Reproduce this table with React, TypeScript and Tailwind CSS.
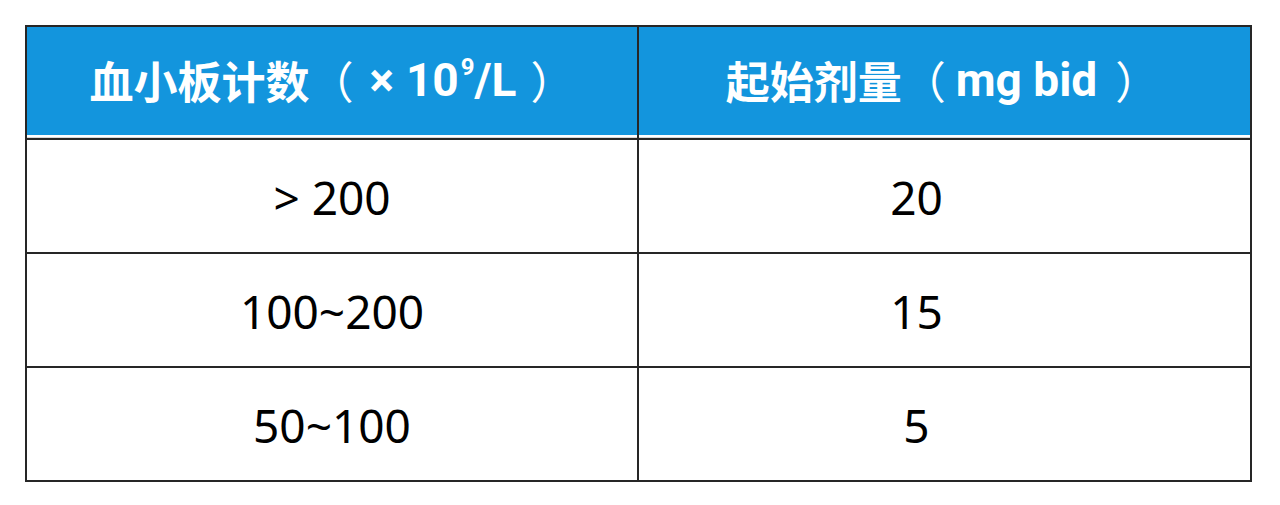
const rows = [
  { count: "> 200", dose: "20" },
  { count: "100~200", dose: "15" },
  { count: "50~100", dose: "5" },
];

export default function App() {
  return (
    <div className="w-[1280px] h-[505px] bg-white pt-[25px] pl-[25px]">
      <div className="w-[1227px] border-2 border-[#262626]">
        {/* header */}
        <div className="grid grid-cols-[612px_1fr] bg-white text-white font-bold">
          <div className="border-r-2 border-[#262626]">
            <div className="h-[108px] bg-[#1395dd] flex items-center justify-center pb-[2px]">
              <span className="font-['Noto_Sans_CJK_SC',sans-serif] text-[44px]">血小板计数</span>
              <span className="font-['Noto_Sans_CJK_SC',sans-serif] text-[44px] font-normal">（</span>
              <span className="font-['Roboto',sans-serif] text-[46px] ml-[16px]">×</span>
              <span className="font-['Roboto',sans-serif] text-[46px] ml-[12px]">10</span>
              <sup className="font-['Roboto',sans-serif] text-[24px] -top-[13px] ml-[2px]">9</sup>
              <span className="font-['Roboto',sans-serif] text-[46px]">/L</span>
              <span className="font-['Noto_Sans_CJK_SC',sans-serif] text-[44px] font-normal ml-[14px]">）</span>
            </div>
            <div className="h-[3px] border-b border-[#d8d8d8]" />
          </div>
          <div>
            <div className="h-[108px] bg-[#1395dd] flex items-center justify-center pb-[2px] pr-[4px]">
              <span className="font-['Noto_Sans_CJK_SC',sans-serif] text-[44px]">起始剂量</span>
              <span className="font-['Noto_Sans_CJK_SC',sans-serif] text-[44px] font-normal">（</span>
              <span className="font-['Roboto',sans-serif] text-[46px] ml-[10px]">mg bid</span>
              <span className="font-['Noto_Sans_CJK_SC',sans-serif] text-[44px] font-normal ml-[18px]">）</span>
            </div>
            <div className="h-[3px] border-b border-[#d8d8d8]" />
          </div>
        </div>

        {/* body */}
        {rows.map((r) => (
          <div
            key={r.count}
            className="grid grid-cols-[612px_1fr] border-t-2 border-[#262626] h-[114px] text-[46px] text-black font-['Noto_Sans',sans-serif]"
          >
            <div className="border-r-2 border-[#262626] flex items-center justify-center pt-[2px]">
              {r.count}
            </div>
            <div className="flex items-center justify-center pt-[2px] pr-[56px]">{r.dose}</div>
          </div>
        ))}
      </div>
    </div>
  );
}
